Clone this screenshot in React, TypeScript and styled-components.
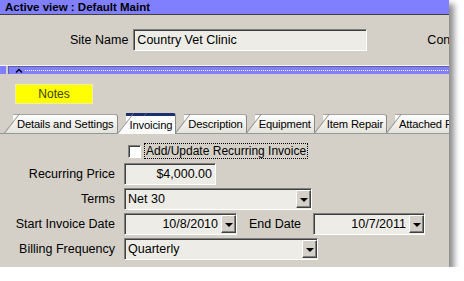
import * as React from 'react';
import styled, { createGlobalStyle } from 'styled-components';

const GlobalStyle = createGlobalStyle`
  html, body {
    margin: 0;
    padding: 0;
    background: #ffffff;
  }
  body {
    font-family: "Liberation Sans", Arial, sans-serif;
  }
`;

const Window = styled.div`
  width: 449px;
  height: 267px;
  background: #d4d0c8;
  box-shadow: 5px 4px 6px rgba(0, 0, 0, 0.45);
  overflow: hidden;
  display: flex;
  flex-direction: column;
  color: #000;
`;

const TitleBar = styled.div`
  height: 14px;
  line-height: 14px;
  background: #8080ff;
  border-bottom: 1px solid #404040;
  padding-left: 5px;
  font-weight: bold;
  font-size: 11.5px;
  white-space: nowrap;
`;

const Header = styled.div`
  height: 50px;
  display: flex;
  align-items: center;
  padding-left: 70px;
  white-space: nowrap;
`;

const Label = styled.span`
  font-size: 12.5px;
  white-space: nowrap;
`;

const HeaderLabel = styled(Label)`
  margin-right: 5px;
`;

const FarLabel = styled(Label)`
  margin-left: 60px;
`;

const Field = styled.div<{ $w: number }>`
  box-sizing: border-box;
  width: ${({ $w }) => $w}px;
  height: 22px;
  flex: none;
  display: flex;
  align-items: center;
  background: #eeece7;
  border: 1px solid;
  border-color: #808080 #ffffff #ffffff #808080;
  box-shadow: inset 1px 1px 0 #404040;
  font-size: 12.5px;
  padding: 0 0 0 3px;
  white-space: nowrap;
`;

const FieldText = styled.span<{ $right?: boolean }>`
  flex: 1;
  text-align: ${({ $right }) => ($right ? 'right' : 'left')};
  padding-right: ${({ $right }) => ($right ? '3px' : '0')};
`;

const DropButton = styled.div`
  box-sizing: border-box;
  width: 15px;
  align-self: stretch;
  margin: 1px 0;
  background: #d4d0c8;
  border: 1px solid;
  border-color: #ffffff #404040 #404040 #ffffff;
  box-shadow: inset -1px -1px 0 #808080;
  display: flex;
  align-items: center;
  justify-content: center;

  &::after {
    content: '';
    border-left: 4px solid transparent;
    border-right: 4px solid transparent;
    border-top: 4px solid #000;
    margin-top: 1px;
  }
`;

const Splitter = styled.div`
  height: 8px;
  display: flex;
  border-top: 1px solid #f4f4f4;
`;

const Grip = styled.div`
  width: 6px;
  background: #8080ff;
`;

const SplitBar = styled.div`
  flex: 1;
  margin-left: 2px;
  background: #8080ff;
  border-top: 1px solid #6060a0;
  border-left: 1px solid #6060a0;
  display: flex;
  align-items: center;
  padding-left: 6px;
  gap: 2px;
`;

const Dots = styled.div`
  flex: 1;
  height: 1px;
  background: repeating-linear-gradient(90deg, #ffffff 0 1px, transparent 1px 2px);
`;

const NotesArea = styled.div`
  height: 38px;
  padding: 10px 0 0 15px;
  box-sizing: border-box;
`;

const NotesButton = styled.div`
  width: 78px;
  height: 20px;
  box-sizing: border-box;
  background: #ffff00;
  border: 1px solid #f0f0a0;
  color: #404000;
  font-size: 12px;
  display: flex;
  align-items: center;
  justify-content: center;
`;

const TabStrip = styled.div`
  height: 21px;
  display: flex;
  align-items: flex-end;
  border-bottom: 1px solid #919b9c;
  padding-left: 5px;
  white-space: nowrap;
`;

const Tab = styled.div<{ $active?: boolean }>`
  position: relative;
  z-index: ${({ $active }) => ($active ? 2 : 1)};
  box-sizing: border-box;
  height: ${({ $active }) => ($active ? 21 : 19)}px;
  margin-left: 8px;
  margin-bottom: ${({ $active }) => ($active ? -1 : 0)}px;
  padding: 0 3px 0 4px;
  display: flex;
  align-items: center;
  font-size: 11.2px;
  letter-spacing: -0.15px;
  background: ${({ $active }) =>
    $active ? '#fcfcfe' : 'linear-gradient(#fefefd, #e4e2da)'};
  border-top: ${({ $active }) => ($active ? '3px solid #1c2f6e' : '1px solid #a4a4a4')};
  border-right: 1px solid #8a8a8a;
  border-top-right-radius: 3px;

  &::before {
    content: '';
    position: absolute;
    z-index: -1;
    top: ${({ $active }) => ($active ? -3 : -1)}px;
    bottom: 0;
    left: -9px;
    width: 12px;
    background: ${({ $active }) =>
      $active ? '#fcfcfe' : 'linear-gradient(#fefefd, #e4e2da)'};
    border-left: 1px solid #8a8a8a;
    border-top: ${({ $active }) => ($active ? '3px solid #1c2f6e' : '1px solid #a4a4a4')};
    transform: skewX(-38deg);
    transform-origin: bottom left;
  }
`;

const TabBody = styled.div`
  flex: 1;
  display: grid;
  grid-template-columns: 115px auto;
  column-gap: 9px;
  row-gap: 3px;
  align-content: start;
  padding-top: 9px;
`;

const RowLabel = styled(Label)`
  text-align: right;
  align-self: center;
`;

const CheckRow = styled.div`
  grid-column: 2;
  display: flex;
  align-items: center;
  padding-left: 4px;
  margin-bottom: 1px;
`;

const CheckBox = styled.div`
  box-sizing: border-box;
  width: 13px;
  height: 13px;
  background: #ffffff;
  border: 1px solid;
  border-color: #808080 #ffffff #ffffff #808080;
  box-shadow: inset 1px 1px 0 #404040;
  margin-right: 3px;
`;

const CheckLabel = styled(Label)`
  font-size: 12px;
  border: 1px dotted #000;
  padding: 0 1px;
  line-height: 14px;
`;

const InlineRow = styled.div`
  display: flex;
  align-items: center;
`;

const MidLabel = styled(Label)`
  width: 76px;
  text-align: center;
`;

function Select({ w, value, right }: { w: number; value: string; right?: boolean }) {
  return (
    <Field $w={w}>
      <FieldText $right={right}>{value}</FieldText>
      <DropButton />
    </Field>
  );
}

const tabs = ['Details and Settings', 'Invoicing', 'Description', 'Equipment', 'Item Repair', 'Attached Products'];

export default function App() {
  return (
    <>
      <GlobalStyle />
      <Window>
        <TitleBar>Active view : Default Maint</TitleBar>
        <Header>
          <HeaderLabel>Site Name</HeaderLabel>
          <Field $w={234}>Country Vet Clinic</Field>
          <FarLabel>Contact</FarLabel>
        </Header>
        <Splitter>
          <Grip />
          <SplitBar>
            <svg width="8" height="5" viewBox="0 0 8 5">
              <path d="M1 4.5 L4 1.5 L7 4.5" fill="none" stroke="#000" strokeWidth="1.4" />
            </svg>
            <Dots />
          </SplitBar>
        </Splitter>
        <NotesArea>
          <NotesButton>Notes</NotesButton>
        </NotesArea>
        <TabStrip>
          {tabs.map((t) => (
            <Tab key={t} $active={t === 'Invoicing'}>
              {t}
            </Tab>
          ))}
        </TabStrip>
        <TabBody>
          <CheckRow>
            <CheckBox />
            <CheckLabel>Add/Update Recurring Invoice</CheckLabel>
          </CheckRow>
          <RowLabel>Recurring Price</RowLabel>
          <Field $w={92}>
            <FieldText $right>$4,000.00</FieldText>
          </Field>
          <RowLabel>Terms</RowLabel>
          <Select w={188} value="Net 30" />
          <RowLabel>Start Invoice Date</RowLabel>
          <InlineRow>
            <Select w={113} value="10/8/2010" right />
            <MidLabel>End Date</MidLabel>
            <Select w={112} value="10/7/2011" right />
          </InlineRow>
          <RowLabel>Billing Frequency</RowLabel>
          <Select w={194} value="Quarterly" />
        </TabBody>
      </Window>
    </>
  );
}
